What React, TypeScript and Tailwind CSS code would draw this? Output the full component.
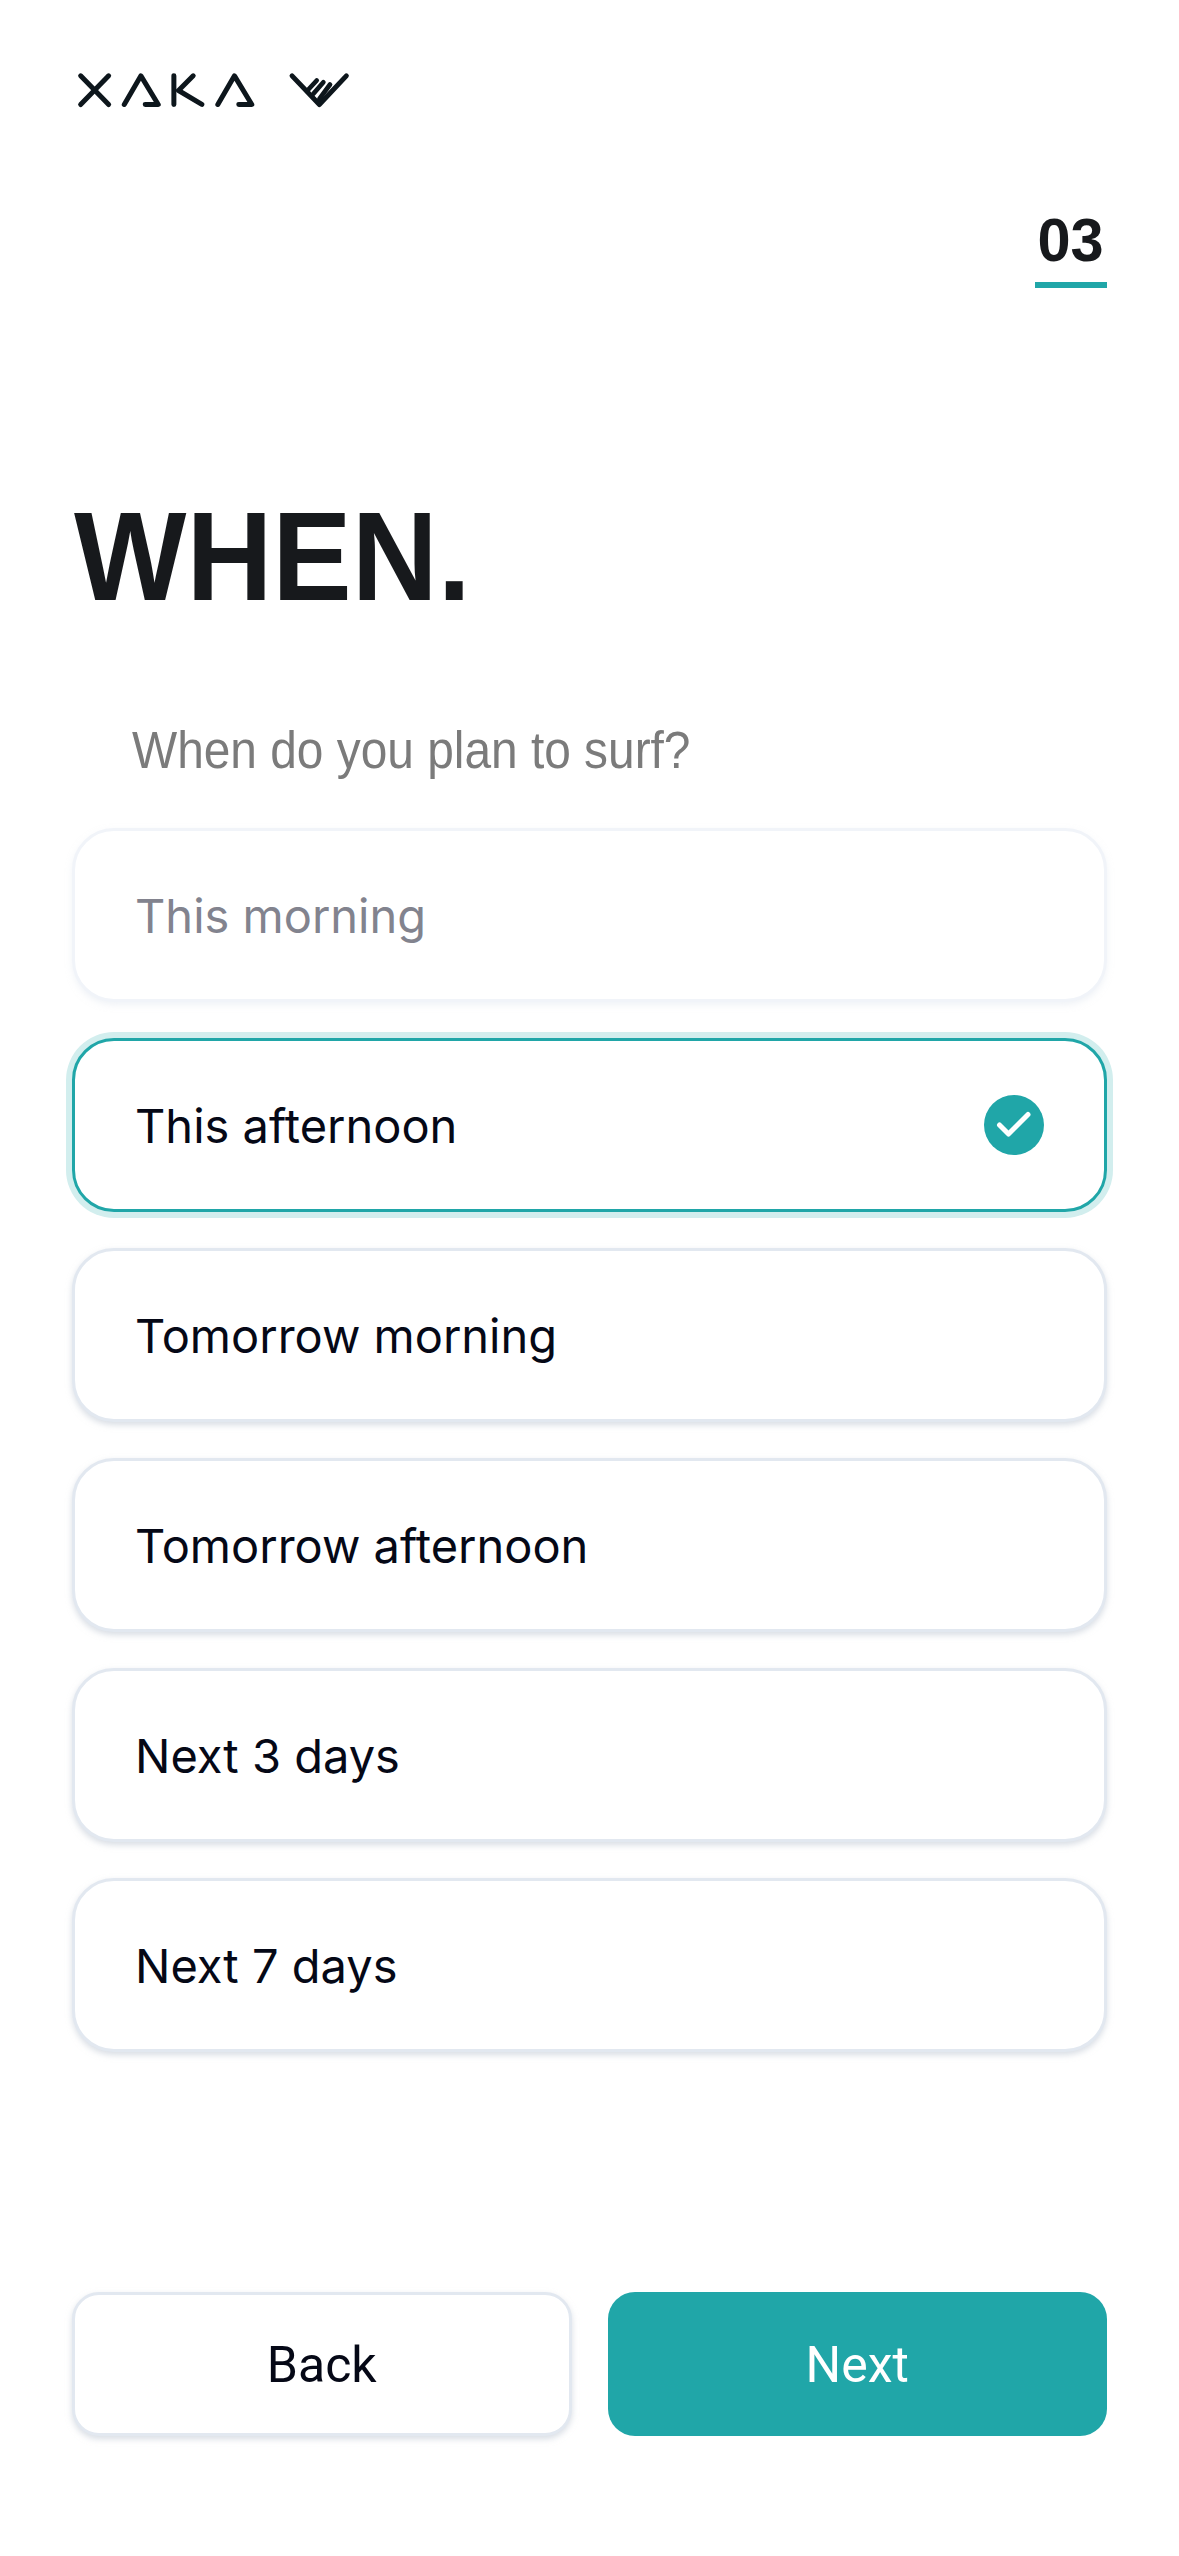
const options = [
  { label: "This morning", state: "disabled" },
  { label: "This afternoon", state: "selected" },
  { label: "Tomorrow morning", state: "normal" },
  { label: "Tomorrow afternoon", state: "normal" },
  { label: "Next 3 days", state: "normal" },
  { label: "Next 7 days", state: "normal" },
];

const Logo = () => (
  <svg width="273" height="37" viewBox="80 95 820 110" fill="none" stroke="#0d161c" strokeWidth="15" strokeLinecap="round" strokeLinejoin="round">
    <path d="M91 106 175 192M175 106 91 192" />
    <path d="M222 192 272 106 324 192H285" />
    <path d="M371 106V192M429 106 385 150 455 192" />
    <path d="M503 192 553 106 605 192H566" />
    <path d="M726 106 808 192 889 106" />
    <path d="M800 120 775 147M820 125 790 160M840 132 808 175" strokeWidth="14" />
  </svg>
);

const OptionCard = ({ label, state }: { label: string; state: string }) => {
  if (state === "selected") {
    return (
      <div className="flex h-[174px] items-center justify-between rounded-[42px] border-[3px] border-[#20a6a8] bg-white pl-[60px] pr-[60px] shadow-[0_0_0_6px_#d2eeee]">
        <span className="pt-[2px] text-[#050816]">{label}</span>
        <svg width="60" height="60" viewBox="0 0 60 60">
          <circle cx="30" cy="30" r="30" fill="#20a6a8" />
          <path d="M15.5 30 24.5 39 44 19.5" fill="none" stroke="#fff" strokeWidth="5" strokeLinecap="round" strokeLinejoin="round" />
        </svg>
      </div>
    );
  }
  if (state === "disabled") {
    return (
      <div className="flex h-[174px] items-center rounded-[42px] border-[3px] border-[#f1f4f9] bg-white pl-[60px] pt-[2px] text-[#82838e] shadow-[0_3px_6px_rgba(226,232,240,0.5)]">
        {label}
      </div>
    );
  }
  return (
    <div className="flex h-[174px] items-center rounded-[42px] border-[3px] border-[#e2e8f0] bg-white pl-[60px] pt-[2px] text-[#050816] shadow-[0_3px_6px_rgba(190,198,210,0.6)]">
      {label}
    </div>
  );
};

export default function App() {
  return (
    <div className="flex h-[2556px] w-[1179px] flex-col bg-white px-[72px] font-['Inter',sans-serif] text-[47px] leading-[58px]">
      <div className="ml-[5px] mt-[72px] h-[37px]">
        <Logo />
      </div>

      <div className="mt-[100px] flex justify-end">
        <div className="w-[72px] border-b-[6px] border-[#20a6a8] pb-[11px] text-center font-['Liberation_Sans',sans-serif] text-[62px] font-bold leading-[62px] text-[#17191c]">
          <span className="inline-block -translate-x-[1px] scale-x-[0.96]">03</span>
        </div>
      </div>

      <h1 className="ml-[2px] mt-[200px] font-['Liberation_Sans',sans-serif] text-[126px] font-bold leading-[138px] text-[#17191c]">
        <span className="inline-block origin-left scale-x-[0.945]">WHEN.</span>
      </h1>

      <p className="mt-[97px] pl-[60px] font-['Liberation_Sans',sans-serif] text-[51px] leading-[56px] text-[#7b7b7b]">
        <span className="inline-block origin-left scale-x-[0.938]">When do you plan to surf?</span>
      </p>

      <div className="mt-[49px] flex flex-col gap-[36px]">
        {options.map((o) => (
          <OptionCard key={o.label} label={o.label} state={o.state} />
        ))}
      </div>

      <div className="mt-[240px] grid grid-cols-2 gap-[36px] font-['Roboto',sans-serif] text-[50px]">
        <button className="h-[144px] rounded-[27px] border-[3px] border-[#e2e8f0] bg-white pt-[2px] text-[#050816] shadow-[0_3px_6px_rgba(190,198,210,0.6)]">
          Back
        </button>
        <button className="h-[144px] rounded-[27px] bg-[#20a6a8] pt-[2px] text-white">Next</button>
      </div>
    </div>
  );
}
